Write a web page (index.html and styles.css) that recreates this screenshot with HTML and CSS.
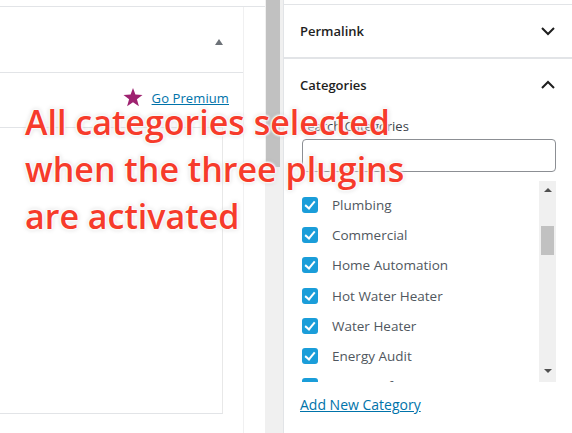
FILE: index.html
```html
<!DOCTYPE html>
<html>
<head>
<meta charset="utf-8">
<link rel="stylesheet" href="styles.css">
</head>
<body>
<div class="page">
  <div class="main">
    <div class="col">
      <div class="panel-head">
        <span class="tri-up"></span>
      </div>
      <div class="premium">
        <svg class="star" width="20" height="19" viewBox="0 0 20 19"><polygon points="10,0 12.4,6.6 19.5,6.9 13.9,11.3 15.9,18.2 10,14.2 4.1,18.2 6.1,11.3 0.5,6.9 7.6,6.6" fill="#9e2270"/></svg>
        <a class="premium-link" href="#">Go Premium</a>
      </div>
      <div class="metabox"></div>
    </div>
  </div>
  <div class="page-scroll"><div class="page-thumb"></div></div>
  <aside class="sidebar">
    <section class="sb-panel">
      <div class="sb-head">
        <span class="sb-title">Permalink</span>
        <svg class="chev" width="16" height="10" viewBox="0 0 16 10"><path d="M2 2 L8 8 L14 2" fill="none" stroke="#1e1e1e" stroke-width="2"/></svg>
      </div>
    </section>
    <section class="sb-panel open">
      <div class="sb-head">
        <span class="sb-title">Categories</span>
        <svg class="chev" width="16" height="10" viewBox="0 0 16 10"><path d="M2 8 L8 2 L14 8" fill="none" stroke="#1e1e1e" stroke-width="2"/></svg>
      </div>
      <div class="sb-body">
        <label class="search-label">Search Categories</label>
        <div class="search-input"></div>
        <div class="cat-list">
          <ul class="cats">
            <li><span class="cb"></span>Plumbing</li>
            <li><span class="cb"></span>Commercial</li>
            <li><span class="cb"></span>Home Automation</li>
            <li><span class="cb"></span>Hot Water Heater</li>
            <li><span class="cb"></span>Water Heater</li>
            <li><span class="cb"></span>Energy Audit</li>
            <li><span class="cb"></span>Water Safety</li>
          </ul>
          <div class="list-scroll">
            <span class="arr-up"></span>
            <span class="list-thumb"></span>
            <span class="arr-down"></span>
          </div>
        </div>
        <a class="add-new" href="#">Add New Category</a>
      </div>
    </section>
  </aside>
  <div class="note">All categories selected<br>when the three plugins<br>are activated</div>
</div>
</body>
</html>
```
FILE: styles.css
```css
html, body {
  margin: 0;
  padding: 0;
  background: #fff;
}
.page {
  position: relative;
  display: flex;
  width: 572px;
  height: 433px;
  overflow: hidden;
  font-family: "Open Sans", "Noto Sans", sans-serif;
}
.main {
  flex: 0 0 265px;
  margin-top: 6px;
  border-top: 1px solid #e2e4e7;
  display: flex;
}
.col {
  width: 243px;
  border-right: 1px solid #f0f0f1;
  display: flex;
  flex-direction: column;
}
.panel-head {
  height: 65px;
  border-bottom: 1px solid #e2e4e7;
  display: flex;
  align-items: center;
  justify-content: flex-end;
  padding-right: 20px;
}
.tri-up {
  width: 0;
  height: 0;
  border-left: 4px solid transparent;
  border-right: 4px solid transparent;
  border-bottom: 6px solid #6d7278;
  margin-top: 4px;
}
.premium {
  height: 54px;
  width: 223px;
  display: flex;
  align-items: center;
  justify-content: flex-end;
  gap: 8px;
  box-sizing: border-box;
  padding-bottom: 4px;
}
.star { display: block; margin-top: -2px; margin-right: 1px; }
.premium-link {
  font-size: 13px;
  letter-spacing: 0.1px;
  color: #0073aa;
  text-decoration: underline;
  margin-right: -6px;
}
.metabox {
  width: 222px;
  flex: 0 0 285px;
  border-top: 1px solid #e2e4e7;
  border-right: 1px solid #e8e8e8;
  border-bottom: 1px solid #e2e4e7;
}
.page-scroll {
  flex: 0 0 18px;
  background: #f0f0f0;
  border-right: 1px solid #e2e4e7;
}
.page-thumb {
  margin-left: 1px;
  width: 14px;
  height: 167px;
  background: #c1c1c1;
}
.sidebar {
  flex: 1;
  margin-top: 4px;
  border-top: 1px solid #e2e4e7;
  color: #1e1e1e;
}
.sb-panel {
  border-bottom: 2px solid #e2e4e7;
}
.sb-panel.open { border-bottom: 0; }
.sb-head {
  height: 52px;
  display: flex;
  align-items: center;
  justify-content: space-between;
  padding: 0 16px;
}
.sb-title {
  font-size: 13px;
  font-weight: 600;
}
.sb-body {
  padding: 0 16px;
  display: flex;
  flex-direction: column;
}
.search-label {
  font-size: 13px;
  color: #3c434a;
  line-height: 18px;
  margin-top: 6px;
}
.search-input {
  height: 31px;
  margin: 4px 0 0 2px;
  border: 1px solid #8c8f94;
  border-radius: 4px;
}
.cat-list {
  margin-top: 9px;
  height: 201px;
  display: flex;
  overflow: hidden;
}
.cats {
  flex: 1;
  list-style: none;
  margin: 0;
  padding: 9px 0 0 2px;
}
.cats li {
  height: 30.2px;
  display: flex;
  align-items: center;
  font-size: 13.5px;
  color: #50575e;
}
.cb {
  flex: 0 0 16px;
  height: 16px;
  border-radius: 3px;
  background: #1a9dd9;
  margin-right: 14px;
  position: relative;
}
.cb::after {
  content: "";
  position: absolute;
  left: 5px;
  top: 2px;
  width: 4px;
  height: 8px;
  border-right: 2.5px solid #fff;
  border-bottom: 2.5px solid #fff;
  transform: rotate(40deg);
}
.list-scroll {
  flex: 0 0 17px;
  background: #f0f0f0;
  display: flex;
  flex-direction: column;
  align-items: center;
}
.arr-up, .arr-down {
  width: 0;
  height: 0;
  border-left: 4px solid transparent;
  border-right: 4px solid transparent;
}
.arr-up {
  border-bottom: 4px solid #505050;
  margin-top: 7px;
}
.list-thumb {
  width: 13px;
  height: 29px;
  background: #c1c1c1;
  margin-top: 34px;
}
.arr-down {
  border-top: 4px solid #505050;
  margin-top: auto;
  margin-bottom: 9px;
}
.add-new {
  margin-top: 13px;
  font-size: 14px;
  color: #0073aa;
  text-decoration: underline;
}
.note {
  position: absolute;
  left: 25px;
  top: 99px;
  font-size: 34px;
  line-height: 47px;
  font-weight: 600;
  color: #f63b2b;
  text-shadow: 0 0 2px #fff, 0 0 2px #fff, 0 0 3px #fff, 0 0 3px #fff, 0 0 4px #fff, 0 0 5px rgba(0,0,0,0.25);
  white-space: nowrap;
}
```
